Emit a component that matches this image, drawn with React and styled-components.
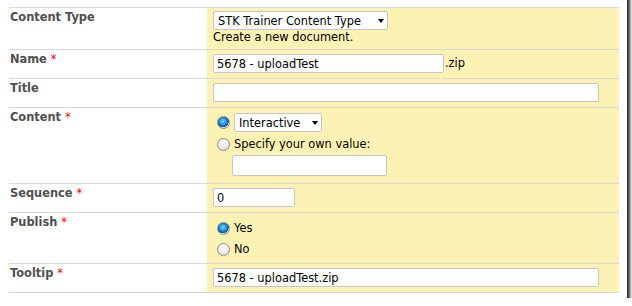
import React from "react";
import styled, { createGlobalStyle } from "styled-components";

const GlobalStyle = createGlobalStyle`
  html, body {
    margin: 0;
    padding: 0;
    background: #ffffff;
    overflow: hidden;
  }
  body {
    font-family: "DejaVu Sans", Verdana, sans-serif;
    font-size: 11.4px;
  }
`;

const Frame = styled.div`
  box-sizing: border-box;
  width: 628px;
  height: 304px;
  margin: -6px 0 0 -1px;
  padding: 13px 0 0 10px;
  background: #ffffff;
  box-shadow: 3px 3px 3px rgba(0, 0, 0, 0.85);
`;

const FormTable = styled.div`
  width: 610px;
  border-bottom: 1px solid #d8d8d8;
`;

const Row = styled.div`
  display: grid;
  grid-template-columns: 198px 412px;
  border-top: 1px solid #d8d8d8;
`;

const Label = styled.div`
  padding: 3px 0 0 1px;
  font-weight: bold;
  line-height: 13px;
  color: #4f4f4f;
`;

const Required = styled.span`
  font-weight: normal;
  color: #ff0000;
`;

const Field = styled.div`
  background: #fcf2b4;
  padding: ${p => p.$pt ?? 4}px 6px ${p => p.$pb ?? 5}px 6px;
  color: #000000;
  line-height: 13px;
`;

const Line = styled.div`
  display: flex;
  align-items: center;
  height: ${p => p.$h ?? 19}px;
  margin-top: ${p => p.$mt ?? 0}px;
`;

const TextInput = styled.input`
  box-sizing: border-box;
  width: ${p => p.$w}px;
  height: ${p => p.$h ?? 19}px;
  margin: ${p => p.$mt ?? 0}px 0 0 ${p => p.$ml ?? 0}px;
  padding: 0 3px;
  border: 1px solid #c6c6c6;
  border-radius: 2px;
  background: #ffffff;
  font-family: "DejaVu Sans", Verdana, sans-serif;
  font-size: 11.4px;
  color: #000000;
  display: block;
  outline: none;
`;

const Suffix = styled.span`
  margin-left: 1px;
`;

const SelectWrap = styled.span`
  position: relative;
  display: inline-block;
  width: ${p => p.$w}px;
  height: 19px;
`;

const Select = styled.select`
  appearance: none;
  box-sizing: border-box;
  width: 100%;
  height: 100%;
  margin: 0;
  padding: 0 0 0 4px;
  border: 1px solid #c6c6c6;
  border-radius: 2px;
  background: #ffffff;
  font-family: "DejaVu Sans", Verdana, sans-serif;
  font-size: 11.4px;
  color: #000000;
  outline: none;
`;

const Arrow = styled.span`
  position: absolute;
  right: 4px;
  top: 8px;
  width: 0;
  height: 0;
  border-left: 3.5px solid transparent;
  border-right: 3.5px solid transparent;
  border-top: 4px solid #000000;
  pointer-events: none;
`;

const Help = styled.div`
  margin-top: 1px;
`;

const Radio = styled.input.attrs({ type: "radio" })`
  appearance: none;
  box-sizing: border-box;
  width: 13px;
  height: 13px;
  margin: 0 4px 0 4px;
  border-radius: 50%;
  border: 1px solid #8e8f8f;
  background: radial-gradient(circle at 50% 35%, #ffffff 0%, #f0f0f0 45%, #c9c9c9 100%);
  flex: none;

  &:checked {
    background:
      radial-gradient(circle at 45% 40%, #7fd7ff 0%, #1d8fd6 40%, #0b4f8a 62%, transparent 66%),
      radial-gradient(circle at 50% 35%, #ffffff 0%, #f0f0f0 45%, #c9c9c9 100%);
  }
`;

const Dropdown = ({ width, value }) => (
  <SelectWrap $w={width}>
    <Select defaultValue={value}>
      <option>{value}</option>
    </Select>
    <Arrow />
  </SelectWrap>
);

const App = () => {
  return (
    <>
      <GlobalStyle />
      <Frame>
        <FormTable>
          <Row>
            <Label>Content Type</Label>
            <Field $pt={3} $pb={5}>
              <Dropdown width={175} value="STK Trainer Content Type" />
              <Help>Create a new document.</Help>
            </Field>
          </Row>
          <Row>
            <Label>
              Name <Required>*</Required>
            </Label>
            <Field>
              <Line>
                <TextInput $w={231} defaultValue="5678 - uploadTest" />
                <Suffix>.zip</Suffix>
              </Line>
            </Field>
          </Row>
          <Row>
            <Label>Title</Label>
            <Field>
              <TextInput $w={386} defaultValue="" />
            </Field>
          </Row>
          <Row>
            <Label>
              Content <Required>*</Required>
            </Label>
            <Field $pt={5} $pb={7}>
              <Line>
                <Radio name="content" defaultChecked />
                <Dropdown width={88} value="Interactive" />
              </Line>
              <Line $h={15} $mt={5}>
                <Radio name="content" />
                <span>Specify your own value:</span>
              </Line>
              <TextInput $w={155} $h={21} $mt={3} $ml={19} defaultValue="" />
            </Field>
          </Row>
          <Row>
            <Label>
              Sequence <Required>*</Required>
            </Label>
            <Field>
              <TextInput $w={82} defaultValue="0" />
            </Field>
          </Row>
          <Row>
            <Label>
              Publish <Required>*</Required>
            </Label>
            <Field $pt={5} $pb={3}>
              <Line $h={21}>
                <Radio name="publish" defaultChecked />
                <span>Yes</span>
              </Line>
              <Line $h={21}>
                <Radio name="publish" />
                <span>No</span>
              </Line>
            </Field>
          </Row>
          <Row>
            <Label>
              Tooltip <Required>*</Required>
            </Label>
            <Field>
              <TextInput $w={386} defaultValue="5678 - uploadTest.zip" />
            </Field>
          </Row>
        </FormTable>
      </Frame>
    </>
  );
};

export default App;
